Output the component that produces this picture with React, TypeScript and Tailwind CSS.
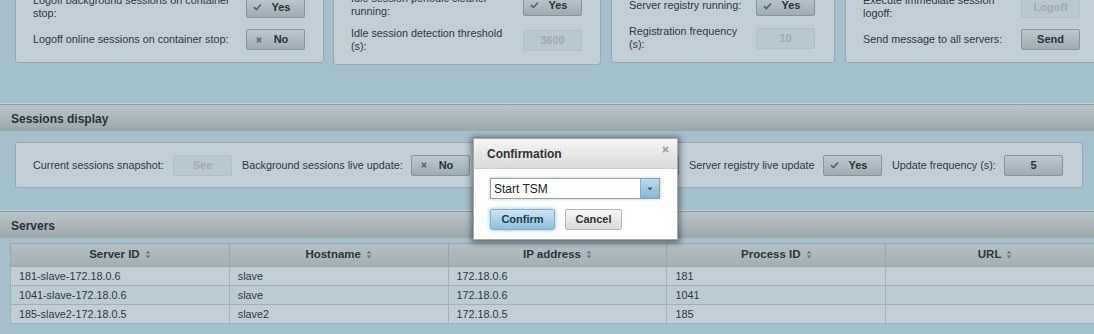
import React from "react";

const Check = () => (
  <svg width="9" height="7" viewBox="0 0 9 7" className="block">
    <path d="M1 3.6 L3.4 6 L8 1" fill="none" stroke="#4b6272" strokeWidth="1.6" />
  </svg>
);
const Cross = () => (
  <svg width="6" height="6" viewBox="0 0 6 6" className="block">
    <path d="M0.8 0.8 L5.2 5.2 M5.2 0.8 L0.8 5.2" fill="none" stroke="#4b6272" strokeWidth="1.5" />
  </svg>
);
const Sort = () => (
  <svg width="6" height="9" viewBox="0 0 6 9" className="inline-block ml-[5px] align-[-1px]">
    <path d="M3 0.8 L5.3 3.4 L0.7 3.4 Z M3 8.2 L5.3 5.6 L0.7 5.6 Z" fill="#66777f" />
  </svg>
);

function Btn({ children, icon, disabled }: { children: React.ReactNode; icon?: "check" | "cross"; disabled?: boolean }) {
  if (disabled) {
    return (
      <div className="shrink-0 w-[59px] h-[21px] rounded-[2px] border border-[#b1bfc6] bg-[#b9c7ce] flex items-center justify-center font-bold text-[11px] text-[#9eacb3]">
        {children}
      </div>
    );
  }
  return (
    <div className="relative shrink-0 w-[59px] h-[21px] rounded-[2px] border border-[#87959c] bg-gradient-to-b from-[#bcc8ce] to-[#9eacb3] flex items-center justify-center font-bold text-[11px] text-[#27343b]">
      {icon && (
        <span className={"absolute top-1/2 -translate-y-1/2 " + (icon === "check" ? "left-[6px]" : "left-[9px]")}>
          {icon === "check" ? <Check /> : <Cross />}
        </span>
      )}
      <span className={icon ? "pl-[11px]" : ""}>{children}</span>
    </div>
  );
}

type Row = { label: React.ReactNode; btn: React.ReactNode };

function Panel({ w, labelW, rows, cls }: { w: string; labelW: string; rows: Row[]; cls: string }) {
  return (
    <div className={"shrink-0 bg-[#c1ced5] border border-[#9aa9b1] rounded-[3px] flex flex-col gap-[3px] pl-[17px] " + w + " " + cls}>
      {rows.map((r, i) => (
        <div key={i} className="flex items-center py-[3px] min-h-[27px]">
          <div className={"leading-[13px] " + labelW}>{r.label}</div>
          <div className="ml-auto">{r.btn}</div>
        </div>
      ))}
    </div>
  );
}

function Header({ title }: { title: string }) {
  return (
    <div className="h-[27px] border-t border-[#8e9ba1] bg-gradient-to-b from-[#bac5ca] to-[#9ca7ac] flex items-center pl-[11px] pt-[2px] font-bold text-[12px] text-[#27333a]">
      {title}
    </div>
  );
}

const servers = [
  ["181-slave-172.18.0.6", "slave", "172.18.0.6", "181", ""],
  ["1041-slave-172.18.0.6", "slave", "172.18.0.6", "1041", ""],
  ["185-slave2-172.18.0.5", "slave2", "172.18.0.5", "185", ""],
];

export default function App() {
  return (
    <div className="relative w-[1094px] h-[334px] overflow-hidden bg-[#a5bfcd] font-['Liberation_Sans',Arial,sans-serif] text-[10.8px] text-[#2c3a42]">
      {/* top area */}
      <div className="h-[103px] flex flex-col justify-end overflow-hidden">
        <div className="flex items-start pb-[38px] pl-[15px]">
          <Panel
            w="w-[309px]"
            labelW="w-[205px]"
            cls="pt-[10px] pb-[9px] pr-[18px]"
            rows={[
              { label: "Logoff background sessions on container stop:", btn: <Btn icon="check">Yes</Btn> },
              { label: "Logoff online sessions on container stop:", btn: <Btn icon="cross">No</Btn> },
            ]}
          />
          <div className="ml-[9px]">
            <Panel
              w="w-[268px]"
              labelW="w-[160px]"
              cls="pt-[8px] pb-[8px] pr-[18px]"
              rows={[
                { label: "Idle session periodic cleaner running:", btn: <Btn icon="check">Yes</Btn> },
                { label: "Idle session detection threshold (s):", btn: <Btn disabled>3600</Btn> },
              ]}
            />
          </div>
          <div className="ml-[10px]">
            <Panel
              w="w-[224px]"
              labelW="w-[115px]"
              cls="pt-[11px] pb-[8px] pr-[19px]"
              rows={[
                { label: "Server registry running:", btn: <Btn icon="check">Yes</Btn> },
                { label: "Registration frequency (s):", btn: <Btn disabled>10</Btn> },
              ]}
            />
          </div>
          <div className="ml-[10px]">
            <Panel
              w="w-[254px]"
              labelW="w-[150px]"
              cls="pt-[10px] pb-[9px] pr-[18px]"
              rows={[
                { label: "Execute immediate session logoff:", btn: <Btn disabled>Logoff</Btn> },
                { label: "Send message to all servers:", btn: <Btn>Send</Btn> },
              ]}
            />
          </div>
        </div>
      </div>

      <div className="h-px bg-[#b7d3e0]" />
      <Header title="Sessions display" />
      <div className="pt-[11px] pb-[22px] pl-[15px]">
        <div className="w-[1068px] h-[46px] bg-[#c1ced5] border border-[#9aa9b1] rounded-[3px] flex items-center pl-[17px]">
          <div className="w-[140px] shrink-0">Current sessions snapshot:</div>
          <Btn disabled>See</Btn>
          <div className="ml-[10px] w-[169px] shrink-0">Background sessions live update:</div>
          <Btn icon="cross">No</Btn>
          <div className="ml-[10px] w-[140px] shrink-0">Online sessions live update:</div>
          <Btn icon="cross">No</Btn>
          <div className="ml-[10px] w-[134px] shrink-0">Server registry live update</div>
          <Btn icon="check">Yes</Btn>
          <div className="ml-[10px] w-[112px] shrink-0">Update frequency (s):</div>
          <Btn>5</Btn>
        </div>
      </div>
      <div className="h-px bg-[#b7d3e0]" />
      <Header title="Servers" />
      <div className="pt-[5px] pl-[10px]">
        <table className="w-[1095px] table-fixed border-collapse border border-[#98a6ad]">
          <thead>
            <tr className="h-[23px] bg-gradient-to-b from-[#b5c0c5] to-[#a3aeb3]">
              {["Server ID", "Hostname", "IP address", "Process ID", "URL"].map((h) => (
                <th key={h} className="border border-[#98a6ad] font-bold text-[11.5px] text-[#2a363d] text-center p-0">
                  {h}
                  <Sort />
                </th>
              ))}
            </tr>
          </thead>
          <tbody>
            {servers.map((r, i) => (
              <tr key={i} className={"h-[19px] " + (i % 2 === 1 ? "bg-[#bccad1]" : "bg-[#c1ced5]")}>
                {r.map((c, j) => (
                  <td key={j} className="border border-[#a2b0b7] px-[8px] py-0 text-[10.8px] text-[#2c3a42]">
                    {c}
                  </td>
                ))}
              </tr>
            ))}
          </tbody>
        </table>
      </div>

      {/* modal dialog */}
      <div className="absolute left-[473px] top-[138px] w-[205px] h-[102px] bg-white border border-[#a9a9a9] shadow-[0_1px_6px_2px_rgba(0,0,0,0.45)] flex flex-col">
        <div className="relative h-[30px] shrink-0 bg-gradient-to-b from-[#f5f5f5] to-[#dadada] border-b border-[#cfcfcf] flex items-center pl-[13px] font-bold text-[12px] text-[#333]">
          Confirmation
          <svg width="7" height="7" viewBox="0 0 7 7" className="absolute right-[8px] top-[7px]">
            <path d="M1 1 L6 6 M6 1 L1 6" stroke="#a3a3a3" strokeWidth="1.8" />
          </svg>
        </div>
        <div className="pl-[16px] pt-[9px]">
          <div className="w-[170px] h-[21px] border border-[#9b9b9b] bg-white flex items-stretch shadow-[0_0_3px_rgba(120,170,200,0.6)]">
            <div className="flex-1 flex items-center pl-[3px] text-[12px] text-[#222]">Start TSM</div>
            <div className="w-[19px] border-l border-[#88aec6] bg-gradient-to-b from-[#bcdcee] to-[#86b6d2] flex items-center justify-center">
              <svg width="6" height="4" viewBox="0 0 6 4">
                <path d="M0.5 0.5 L5.5 0.5 L3 3.5 Z" fill="#3b5a6e" />
              </svg>
            </div>
          </div>
          <div className="flex mt-[10px] gap-[10px]">
            <div className="w-[65px] h-[21px] rounded-[2px] border border-[#86b0cb] bg-gradient-to-b from-[#cbe5f3] to-[#8fbfdb] shadow-[0_0_4px_rgba(100,160,200,0.7)] flex items-center justify-center font-bold text-[11px] text-[#1f3a4c]">
              Confirm
            </div>
            <div className="w-[57px] h-[21px] rounded-[2px] border border-[#b3b3b3] bg-gradient-to-b from-[#f7f7f7] to-[#d9d9d9] flex items-center justify-center font-bold text-[11px] text-[#333]">
              Cancel
            </div>
          </div>
        </div>
      </div>
    </div>
  );
}
